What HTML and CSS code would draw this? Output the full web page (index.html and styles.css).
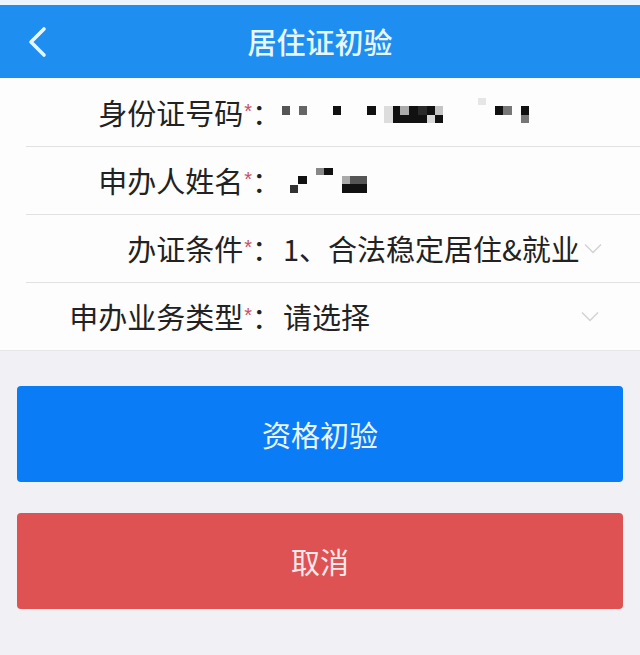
FILE: index.html
```html
<!DOCTYPE html>
<html lang="zh-CN">
<head>
<meta charset="utf-8">
<title>居住证初验</title>
<link rel="stylesheet" href="styles.css">
</head>
<body>
<div class="status"></div>
<header class="nav">
  <svg class="back" width="24" height="32" viewBox="0 0 24 32"><polyline points="18,3 5,16 18,29" fill="none" stroke="#e6f6ff" stroke-width="3.6" stroke-linecap="round" stroke-linejoin="round"/></svg>
  <h1 class="title">居住证初验</h1>
</header>
<section class="form">
  <div class="row row-first">
    <div class="label">身份证号码<span class="req">*</span>：</div>
    <div class="value">
      <svg class="mosaic" width="260" height="30" viewBox="281 97 260 30">
        <rect x="282" y="106" width="8" height="9" fill="#555"/>
        <rect x="299" y="106" width="8" height="9" fill="#666"/>
        <rect x="333" y="106" width="8" height="9" fill="#111"/>
        <rect x="367" y="106" width="9" height="9" fill="#111"/>
        <rect x="384" y="106" width="9" height="17" fill="#ddd"/>
        <rect x="393" y="106" width="7" height="17" fill="#111"/>
        <rect x="400" y="106" width="9" height="9" fill="#aaa"/>
        <rect x="400" y="115" width="9" height="8" fill="#111"/>
        <rect x="409" y="106" width="26" height="17" fill="#111"/>
        <rect x="418" y="106" width="9" height="9" fill="#2a2a2a"/>
        <rect x="435" y="106" width="8" height="9" fill="#c4c4c4"/>
        <rect x="435" y="115" width="8" height="8" fill="#111"/>
        <rect x="427" y="115" width="8" height="8" fill="#d8d8d8"/>
        <rect x="478" y="98" width="8" height="7" fill="#e6e6e6"/>
        <rect x="495" y="106" width="8" height="9" fill="#111"/>
        <rect x="503" y="106" width="9" height="9" fill="#777"/>
        <rect x="521" y="106" width="8" height="9" fill="#111"/>
        <rect x="521" y="115" width="8" height="8" fill="#777"/>
      </svg>
    </div>
  </div>
  <div class="row">
    <div class="label">申办人姓名<span class="req">*</span>：</div>
    <div class="value">
      <svg class="mosaic" width="260" height="30" viewBox="281 165 260 30">
        <rect x="290" y="184" width="8" height="8" fill="#333"/>
        <rect x="298" y="175" width="9" height="8" fill="#111"/>
        <rect x="316" y="167" width="8" height="7" fill="#888"/>
        <rect x="324" y="167" width="9" height="7" fill="#111"/>
        <rect x="342" y="175" width="8" height="8" fill="#aaa"/>
        <rect x="350" y="175" width="17" height="8" fill="#555"/>
        <rect x="342" y="183" width="25" height="9" fill="#111"/>
      </svg>
    </div>
  </div>
  <div class="row">
    <div class="label">办证条件<span class="req">*</span>：</div>
    <div class="value value-text">1、合法稳定居住&amp;就业</div>
    <svg class="arrow" width="18" height="11" viewBox="0 0 18 11"><polyline points="1,1.5 9,9.5 17,1.5" fill="none" stroke="#d2d2d6" stroke-width="1.4"/></svg>
  </div>
  <div class="row row-last">
    <div class="label">申办业务类型<span class="req">*</span>：</div>
    <div class="value value-text">请选择</div>
    <svg class="arrow" width="18" height="11" viewBox="0 0 18 11"><polyline points="1,1.5 9,9.5 17,1.5" fill="none" stroke="#d2d2d6" stroke-width="1.4"/></svg>
  </div>
</section>
<div class="actions">
  <button class="btn btn-primary" type="button">资格初验</button>
  <button class="btn btn-danger" type="button">取消</button>
</div>
</body>
</html>
```

FILE: styles.css
```css
html, body {
  margin: 0;
  padding: 0;
}
body {
  width: 640px;
  min-height: 655px;
  background: #f1f0f4;
  font-family: "Noto Sans CJK SC", "Noto Sans", sans-serif;
  color: #222;
}
.status {
  height: 5px;
  background: #eaf4fb;
}
.nav {
  height: 73px;
  background: #1f8ef1;
  display: flex;
  align-items: center;
  justify-content: center;
  position: relative;
}
.back {
  position: absolute;
  left: 26px;
  top: 21px;
}
.title {
  margin: 0;
  font-size: 29px;
  font-weight: 500;
  line-height: 1;
  color: #e8f6ff;
}
.form {
  background: #fdfdfd;
  padding-left: 26px;
  border-bottom: 1px solid #e6e6ea;
}
.row {
  height: 67px;
  display: flex;
  align-items: center;
  border-bottom: 1px solid #e1e1e4;
  font-size: 29px;
  line-height: 1;
}
.row-first {
  height: 68px;
}
.row-last {
  border-bottom: none;
}
.label {
  width: 255px;
  flex: none;
  text-align: right;
  white-space: nowrap;
  color: #222;
}
.req {
  font-family: "Liberation Sans", sans-serif;
  font-size: 20px;
  color: #c9505c;
  vertical-align: 7px;
  margin-left: 1px;
}
.value {
  flex: 1;
  white-space: nowrap;
  display: flex;
  align-items: center;
  color: #222;
}
.value-text {
  padding-left: 2px;
}
.mosaic {
  display: block;
}
.arrow {
  flex: none;
  margin-right: 41px;
  margin-left: 4px;
}
.actions {
  padding: 35px 17px 0;
  display: flex;
  flex-direction: column;
  gap: 31px;
}
.btn {
  height: 96px;
  border: none;
  border-radius: 4px;
  font-family: "Noto Sans CJK SC", "Noto Sans", sans-serif;
  font-size: 29px;
  color: #eaf4ff;
  padding: 0;
}
.btn-primary {
  background: #0a7cf6;
}
.btn-danger {
  background: #df5254;
  color: #fbe9ea;
}
```
